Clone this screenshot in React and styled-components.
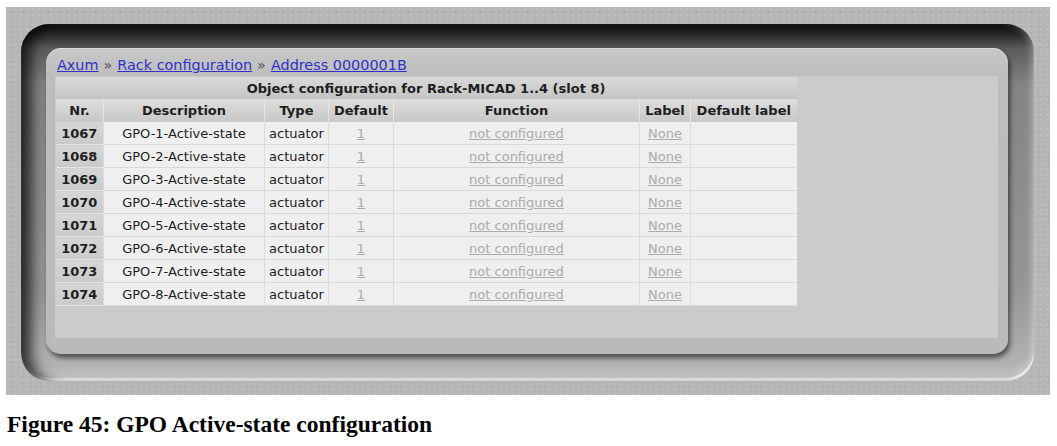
import React from 'react'
import styled, { createGlobalStyle } from 'styled-components'

const Global = createGlobalStyle`
  body {
    margin: 0;
    background: #fff;
  }
`

const Page = styled.div`
  width: 1057px;
  height: 446px;
  box-sizing: border-box;
  padding: 7px 0 0 6px;
`

const Screen = styled.div`
  width: 1044px;
  height: 388px;
  box-sizing: border-box;
  padding: 17px 16px 14px 15px;
  background-color: #b6b6b6;
  background-image:
    radial-gradient(rgba(255, 255, 255, 0.1) 1px, transparent 2px),
    radial-gradient(rgba(0, 0, 0, 0.04) 1px, transparent 2px);
  background-size: 6px 5px, 9px 7px;
  background-position: 0 0, 3px 2px;
`

const Bezel = styled.div`
  height: 100%;
  box-sizing: border-box;
  padding: 24px 26px 27px 25px;
  border-radius: 28px;
  background: linear-gradient(180deg, #0c0c0c 0, #262626 10px, #5a5a5a 24px, #838383 60px, #969696 75%, #b8b8b8 100%);
  box-shadow:
    inset 16px 0 14px -6px rgba(0, 0, 0, 0.75),
    inset -6px 0 8px -4px rgba(255, 255, 255, 0.35),
    inset 0 -3px 1px rgba(255, 255, 255, 0.75),
    inset 0 -12px 12px -6px rgba(255, 255, 255, 0.35);
`

const Panel = styled.div`
  height: 100%;
  box-sizing: border-box;
  display: flex;
  flex-direction: column;
  border-radius: 15px;
  background: linear-gradient(180deg, #c8c8c8 0, #bdbdbd 28px, #bababa 100%);
  box-shadow: 2px 4px 5px rgba(0, 0, 0, 0.55), inset 0 1px 0 rgba(255, 255, 255, 0.35);
`

const Crumbs = styled.div`
  height: 28px;
  box-sizing: border-box;
  padding: 8px 0 0 11px;
  font-family: "DejaVu Sans", Verdana, sans-serif;
  font-size: 14.4px;
  line-height: 19px;
  color: #444;
`

const Crumb = styled.a`
  color: #3131c8;
  text-decoration: underline;
`

const Sep = styled.span`
  color: #555;
  margin: 0 5px;
`

const Content = styled.div`
  flex: 1;
  margin: 0 10px 16px 9px;
  padding-top: 1px;
  background: #cbcbcb;
`

const Table = styled.table`
  width: 741px;
  table-layout: fixed;
  border-collapse: collapse;
  font-family: "DejaVu Sans", Verdana, sans-serif;
  font-size: 13px;
  color: #1e1e1e;
`

const TitleCell = styled.th`
  height: 22px;
  padding: 0;
  font-weight: bold;
  text-align: center;
  background: linear-gradient(180deg, #d9d9d9 0, #cdcdcd 60%, #c3c3c3 100%);
`

const HeadCell = styled.th`
  height: 23px;
  padding: 0;
  font-weight: bold;
  text-align: center;
  white-space: nowrap;
  background: linear-gradient(180deg, #dedede 0, #d2d2d2 50%, #c8c8c8 100%);
  border-left: 1px solid ${({ first }) => (first ? 'transparent' : '#e6e6e6')};
`

const NrCell = styled.td`
  height: 22px;
  padding: 0;
  font-weight: bold;
  text-align: center;
  background: linear-gradient(180deg, #d6d6d6 0, #cacaca 100%);
  border-bottom: 1px solid #e4e4e4;
`

const Cell = styled.td`
  height: 22px;
  padding: 0;
  text-align: center;
  white-space: nowrap;
  background: #efefef;
  border-bottom: 1px solid #d9d9d9;
  border-left: 1px solid #dcdcdc;
`

const Muted = styled.a`
  color: #ababab;
  text-decoration: underline;
`

const Caption = styled.div`
  margin: 16px 0 0 1px;
  font-family: "Liberation Serif", "Times New Roman", serif;
  font-weight: bold;
  font-size: 23.5px;
  line-height: 27px;
  color: #000;
`

const widths = [48, 161, 64, 65, 246, 51, 106]
const heads = ['Nr.', 'Description', 'Type', 'Default', 'Function', 'Label', 'Default label']
const rows = Array.from({ length: 8 }, (_, i) => ({ nr: 1067 + i, desc: `GPO-${i + 1}-Active-state` }))

export default function App () {
  return (
    <Page>
      <Global />
      <Screen>
        <Bezel>
          <Panel>
            <Crumbs>
              <Crumb>Axum</Crumb>
              <Sep>»</Sep>
              <Crumb>Rack configuration</Crumb>
              <Sep>»</Sep>
              <Crumb>Address 0000001B</Crumb>
            </Crumbs>
            <Content>
              <Table>
                <colgroup>
                  {widths.map((w, i) => <col key={i} style={{ width: w }} />)}
                </colgroup>
                <thead>
                  <tr>
                    <TitleCell colSpan={7}>Object configuration for Rack-MICAD 1..4 (slot 8)</TitleCell>
                  </tr>
                  <tr>
                    {heads.map((h, i) => <HeadCell key={h} first={i === 0}>{h}</HeadCell>)}
                  </tr>
                </thead>
                <tbody>
                  {rows.map(r => (
                    <tr key={r.nr}>
                      <NrCell>{r.nr}</NrCell>
                      <Cell>{r.desc}</Cell>
                      <Cell>actuator</Cell>
                      <Cell><Muted>1</Muted></Cell>
                      <Cell><Muted>not configured</Muted></Cell>
                      <Cell><Muted>None</Muted></Cell>
                      <Cell />
                    </tr>
                  ))}
                </tbody>
              </Table>
            </Content>
          </Panel>
        </Bezel>
      </Screen>
      <Caption>Figure 45: GPO Active-state configuration</Caption>
    </Page>
  )
}
